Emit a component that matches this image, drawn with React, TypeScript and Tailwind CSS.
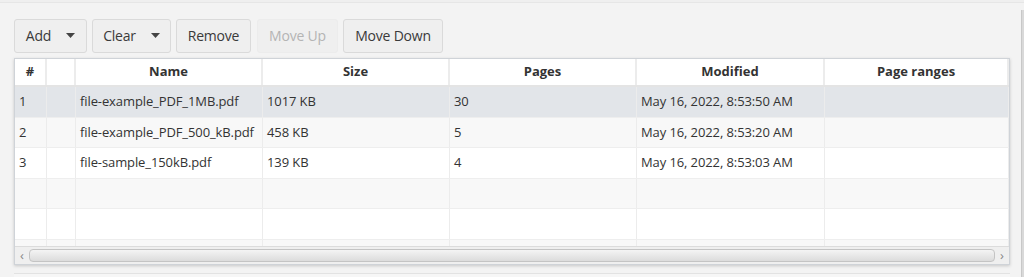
import React from "react";

const cols = [
  { name: "#", w: "w-[32px]" },
  { name: "", w: "w-[29px]" },
  { name: "Name", w: "w-[187px]" },
  { name: "Size", w: "w-[187px]" },
  { name: "Pages", w: "w-[187px]" },
  { name: "Modified", w: "w-[188px]" },
  { name: "Page ranges", w: "flex-1" },
];

const rows = [
  ["1", "", "file-example_PDF_1MB.pdf", "1017 KB", "30", "May 16, 2022, 8:53:50 AM", ""],
  ["2", "", "file-example_PDF_500_kB.pdf", "458 KB", "5", "May 16, 2022, 8:53:20 AM", ""],
  ["3", "", "file-sample_150kB.pdf", "139 KB", "4", "May 16, 2022, 8:53:03 AM", ""],
  ["", "", "", "", "", "", ""],
  ["", "", "", "", "", "", ""],
  ["", "", "", "", "", "", ""],
];

function Caret() {
  return (
    <svg width="9" height="5" viewBox="0 0 9 5" className="ml-[15px]">
      <path d="M0 0h9L4.5 5z" fill="#444" />
    </svg>
  );
}

function Btn({ label, menu, disabled, w }: { label: string; menu?: boolean; disabled?: boolean; w: string }) {
  return (
    <div
      className={`${w} h-[34px] pb-[2px] flex items-center justify-center rounded-[3px] border ${
        disabled ? "border-[#ececec] text-[#b4b4b4]" : "border-[#dadada] text-[#3a3a3a]"
      } bg-[#efefef] text-[14px] tracking-[-0.2px]`}
    >
      <span>{label}</span>
      {menu && <Caret />}
    </div>
  );
}

export default function App() {
  return (
    <div className="w-[1024px] h-[277px] bg-[#f3f3f3] relative overflow-hidden font-['Open_Sans',sans-serif]">
      <div className="h-[3px] border-b border-[#e6e6e6] bg-[#efefef]" />
      <div className="flex gap-[5px] pl-[14px] pt-[16px]">
        <Btn label="Add" menu w="w-[73px]" />
        <Btn label="Clear" menu w="w-[79px]" />
        <Btn label="Remove" w="w-[75px]" />
        <div className="ml-[1px]">
          <Btn label="Move Up" disabled w="w-[81px]" />
        </div>
        <Btn label="Move Down" w="w-[100px]" />
      </div>
      <div className="ml-[14px] mt-[5px] w-[996px] h-[207px] border border-[#cfd3d8] bg-white shadow-[0_1px_3px_rgba(0,0,0,0.18)] flex flex-col overflow-hidden">
        <div className="flex h-[28px] border-b-[2px] border-[#e4e4e4] bg-white">
          {cols.map((c, i) => (
            <div
              key={i}
              className={`${c.w} flex items-center justify-center border-r-[2px] border-[#ececec] text-[13px] font-bold text-[#333]`}
            >
              {c.name}
            </div>
          ))}
        </div>
        <div className="flex-1 overflow-hidden">
          {rows.map((r, ri) => (
            <div
              key={ri}
              className={`flex h-[30.5px] border-b border-[#eeeeee] ${
                ri === 0 ? "bg-[#e2e5e9]" : ri % 2 === 1 ? "bg-[#f8f8f8]" : "bg-white"
              }`}
            >
              {cols.map((c, ci) => (
                <div
                  key={ci}
                  className={`${c.w} flex items-center pl-[4px] border-r border-[#ececec] text-[13px] text-[#333] whitespace-nowrap tracking-[-0.1px]`}
                >
                  {r[ci]}
                </div>
              ))}
            </div>
          ))}
        </div>
        <div className="h-[18px] flex items-center bg-[#efefef] border-t border-[#dcdcdc] shrink-0">
          <span className="w-[14px] text-[13px] text-[#888] text-center leading-none">‹</span>
          <div className="flex-1 h-[13px] rounded-[4px] border border-[#c4c4c4] bg-gradient-to-b from-[#f4f4f4] to-[#dcdcdc]" />
          <span className="w-[14px] text-[13px] text-[#888] text-center leading-none">›</span>
        </div>
      </div>
      <div className="ml-[14px] mt-[8px] w-[996px] h-[10px] border-t border-[#e2e2e2] bg-[#f6f6f6]" />
      <div className="absolute right-0 top-[10px] w-[3px] h-[267px] bg-[#d9d9d9] border-l border-[#c8c8c8]" />
    </div>
  );
}
